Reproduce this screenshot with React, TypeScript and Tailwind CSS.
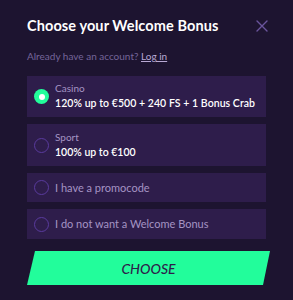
import React from "react";

const Radio = ({ checked }: { checked?: boolean }) =>
  checked ? (
    <span className="flex h-[15px] w-[15px] shrink-0 items-center justify-center rounded-full bg-[#22fd9b]">
      <span className="h-[6px] w-[6px] rounded-full bg-white" />
    </span>
  ) : (
    <span className="h-[15px] w-[15px] shrink-0 rounded-full border-[1.5px] border-[#5a3b9e]" />
  );

export default function App() {
  const font = { fontFamily: "Lato, 'Noto Sans', sans-serif" };
  return (
    <div className="h-[300px] w-[293px] bg-[#1d1430] px-[27px] pt-[15px]" style={font}>
      <div className="flex items-start justify-between">
        <h1 className="text-[14.5px] font-bold leading-[22px] tracking-[0.1px] text-white">Choose your Welcome Bonus</h1>
        <svg width="12" height="12" viewBox="0 0 12 12" className="mr-[-2px] mt-[5px]">
          <path d="M1 1L11 11M11 1L1 11" stroke="#6a559c" strokeWidth="1.4" strokeLinecap="round" />
        </svg>
      </div>
      <p className="mt-[12px] text-[10px] leading-[14px] text-[#75659a]">
        Already have an account? <span className="text-[#b8a9d4] underline">Log in</span>
      </p>
      <div className="mt-[13px] flex flex-col gap-[7px]">
        <div className="flex h-[41px] items-center gap-[6px] bg-[#2e1d4b] px-[7px]">
          <Radio checked />
          <div className="flex flex-col">
            <span className="text-[10px] leading-[13px] text-[#a594c4]">Casino</span>
            <span className="whitespace-nowrap text-[10.5px] font-semibold leading-[16px] tracking-[0.05px] text-white">120% up to €500 + 240 FS + 1 Bonus Crab</span>
          </div>
        </div>
        <div className="flex h-[42px] items-center gap-[6px] bg-[#2e1d4b] px-[7px]">
          <Radio />
          <div className="flex flex-col">
            <span className="text-[10px] leading-[13px] text-[#a594c4]">Sport</span>
            <span className="text-[10.5px] font-semibold leading-[16px] text-white">100% up to €100</span>
          </div>
        </div>
        <div className="flex h-[29px] items-center gap-[6px] bg-[#2e1d4b] px-[7px]">
          <Radio />
          <span className="text-[11px] leading-[16px] text-[#a594c4]">I have a promocode</span>
        </div>
        <div className="flex h-[30px] items-center gap-[6px] bg-[#2e1d4b] px-[7px]">
          <Radio />
          <span className="text-[11px] leading-[16px] text-[#a594c4]">I do not want a Welcome Bonus</span>
        </div>
      </div>
      <button
        className="mt-[12px] flex h-[34px] w-[243px] items-center justify-center bg-[#22fd9b] text-[14px] font-medium italic text-[#2e1d4b]"
        style={{ clipPath: "polygon(8px 0, 100% 0, calc(100% - 7px) 100%, 0 100%)" }}
      >
        CHOOSE
      </button>
    </div>
  );
}
